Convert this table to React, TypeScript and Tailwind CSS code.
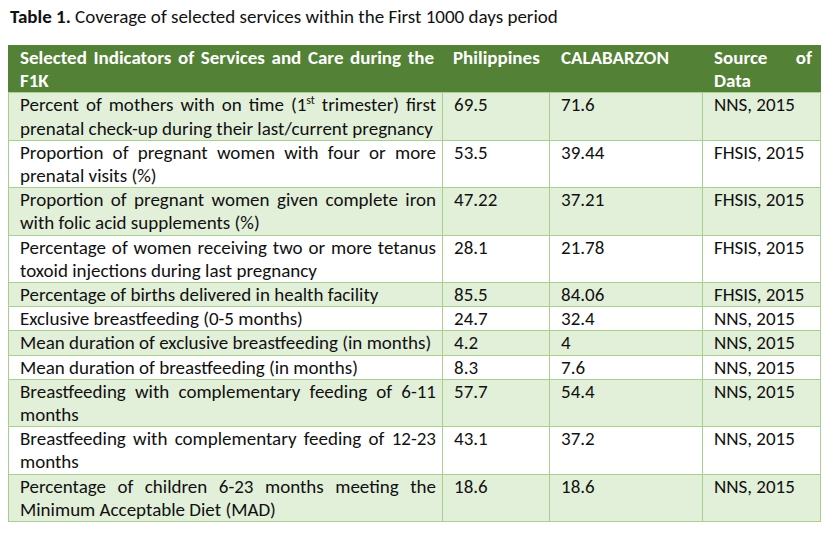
const rows: { label: React.ReactNode; ph: string; cal: string; src: string }[] = [
  {
    label: (
      <>
        Percent of mothers with on time (1<sup className="text-[12px] -top-[7px]">st</sup> trimester) first prenatal check-up during their last/current pregnancy
      </>
    ),
    ph: "69.5",
    cal: "71.6",
    src: "NNS, 2015",
  },
  { label: "Proportion of pregnant women with four or more prenatal visits (%)", ph: "53.5", cal: "39.44", src: "FHSIS, 2015" },
  { label: "Proportion of pregnant women given complete iron with folic acid supplements (%)", ph: "47.22", cal: "37.21", src: "FHSIS, 2015" },
  { label: "Percentage of women receiving two or more tetanus toxoid injections during last pregnancy", ph: "28.1", cal: "21.78", src: "FHSIS, 2015" },
  { label: "Percentage of births delivered in health facility", ph: "85.5", cal: "84.06", src: "FHSIS, 2015" },
  { label: "Exclusive breastfeeding (0-5 months)", ph: "24.7", cal: "32.4", src: "NNS, 2015" },
  { label: "Mean duration of exclusive breastfeeding (in months)", ph: "4.2", cal: "4", src: "NNS, 2015" },
  { label: "Mean duration of breastfeeding (in months)", ph: "8.3", cal: "7.6", src: "NNS, 2015" },
  { label: "Breastfeeding with complementary feeding of 6-11 months", ph: "57.7", cal: "54.4", src: "NNS, 2015" },
  { label: "Breastfeeding with complementary feeding of 12-23 months", ph: "43.1", cal: "37.2", src: "NNS, 2015" },
  { label: "Percentage of children 6-23 months meeting the Minimum Acceptable Diet (MAD)", ph: "18.6", cal: "18.6", src: "NNS, 2015" },
];

const cell = "border border-[#a8d08d] align-top pl-[11px] pr-[6px] py-0";

export default function App() {
  return (
    <div className="w-[833px] h-[533px] bg-white text-[19px] leading-[23.2px] text-[#111]" style={{ fontFamily: "Carlito, Lato, sans-serif" }}>
      <p className="pt-[5px] pl-[10px] h-[45px]">
        <span className="font-bold">Table 1.</span> Coverage of selected services within the First 1000 days period
      </p>

      <table className="ml-[8px] w-[812px] table-fixed border-collapse">
        <colgroup>
          <col className="w-[434px]" />
          <col className="w-[107px]" />
          <col className="w-[153px]" />
          <col className="w-[118px]" />
        </colgroup>
        <thead>
          <tr className="bg-[#538135] text-white font-bold">
            <th className="border border-[#538135] border-b-[#a8d08d] align-top pl-[11px] pr-[8px] text-justify [text-align-last:left]">
              Selected Indicators of Services and Care during the F1K
            </th>
            <th className="border border-[#538135] border-b-[#a8d08d] align-top pl-[10px] pr-0 text-left">Philippines</th>
            <th className="border border-[#538135] border-b-[#a8d08d] align-top pl-[11px] text-left">CALABARZON</th>
            <th className="border border-[#538135] border-b-[#a8d08d] align-top pl-[11px] pr-[8px] text-justify [text-align-last:left]">
              Source of Data
            </th>
          </tr>
        </thead>
        <tbody>
          {rows.map((r, i) => (
            <tr key={i} className={i % 2 === 0 ? "bg-[#e2efd9]" : "bg-white"}>
              <td className={`${cell} text-justify`}>{r.label}</td>
              <td className={`${cell} pl-[10px]`}>{r.ph}</td>
              <td className={cell}>{r.cal}</td>
              <td className={cell}>{r.src}</td>
            </tr>
          ))}
        </tbody>
      </table>
    </div>
  );
}
